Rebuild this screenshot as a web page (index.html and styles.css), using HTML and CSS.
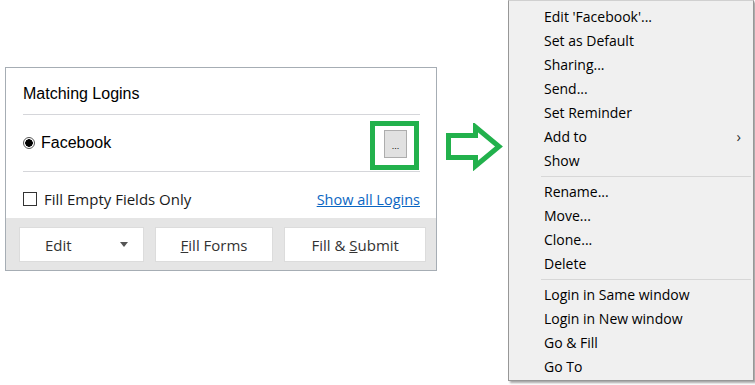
FILE: index.html
```html
<!DOCTYPE html>
<html lang="en">
<head>
  <meta charset="UTF-8">
  <title>Matching Logins</title>
  <link rel="stylesheet" href="styles.css">
</head>
<body>

  <div class="stage">

    <div class="panel">
      <div class="panel-body">
        <div class="panel-title">Matching Logins</div>
        <div class="login-row">
          <span class="radio"></span>
          <span class="login-name">Facebook</span>
          <span class="more-wrap">
            <span class="more-btn">...</span>
            <span class="highlight"></span>
          </span>
        </div>
        <div class="options-row">
          <label class="check-label"><span class="checkbox"></span>Fill Empty Fields Only</label>
          <a class="show-all" href="#">Show all Logins</a>
        </div>
      </div>
      <div class="panel-footer">
        <div class="btn btn-edit"><span>Edit</span><span class="caret"></span></div>
        <div class="btn btn-fill"><span><u>F</u>ill Forms</span></div>
        <div class="btn btn-submit"><span>Fill &amp; <u>S</u>ubmit</span></div>
      </div>
    </div>

    <svg class="arrow" width="58" height="48" viewBox="0 0 58 48">
      <polygon points="2.5,12.5 29.5,12.5 29.5,4 53,23.5 29.5,43 29.5,34.5 2.5,34.5"
               fill="none" stroke="#22b14c" stroke-width="5" stroke-linejoin="miter"/>
    </svg>

    <div class="menu">
      <div class="menu-item">Edit 'Facebook'...</div>
      <div class="menu-item">Set as Default</div>
      <div class="menu-item">Sharing...</div>
      <div class="menu-item">Send...</div>
      <div class="menu-item">Set Reminder</div>
      <div class="menu-item has-sub">Add to <span class="chevron">&#8250;</span></div>
      <div class="menu-item">Show</div>
      <div class="menu-sep"></div>
      <div class="menu-item">Rename...</div>
      <div class="menu-item">Move...</div>
      <div class="menu-item">Clone...</div>
      <div class="menu-item">Delete</div>
      <div class="menu-sep"></div>
      <div class="menu-item">Login in Same window</div>
      <div class="menu-item">Login in New window</div>
      <div class="menu-item">Go &amp; Fill</div>
      <div class="menu-item">Go To</div>
    </div>

  </div>

</body>
</html>
```

FILE: styles.css
```css
body {
  margin: 0;
  background-color: #ffffff;
  font-family: "Open Sans", "Liberation Sans", sans-serif;
  color: #000;
  overflow: hidden;
}
.stage {
  display: flex;
  align-items: flex-start;
  width: 755px;
  height: 385px;
}

/* Matching logins panel */
.panel {
  margin-top: 67px;
  margin-left: 5px;
  width: 430px;
  border: 1px solid #a6adb4;
  background: #fff;
}
.panel-body {
  padding: 0 16px 0 17px;
}
.panel-title {
  font-family: "Liberation Sans", Arial, sans-serif;
  font-size: 16px;
  height: 46px;
  line-height: 52px;
  border-bottom: 1px solid #d5d6da;
}
.login-row {
  display: flex;
  align-items: center;
  height: 56px;
  border-bottom: 1px solid #d5d6da;
}
.radio {
  width: 10px;
  height: 10px;
  border: 1px solid #555;
  border-radius: 50%;
  background: radial-gradient(circle, #000 0, #000 3.5px, #fff 4px);
  margin-right: 6px;
}
.login-name {
  font-family: "Liberation Sans", Arial, sans-serif;
  font-size: 16px;
  flex: 1;
}
.more-wrap {
  position: relative;
  margin-right: 13px;
  margin-top: 2px;
}
.more-btn {
  display: block;
  width: 21px;
  height: 26px;
  background: #e1e1e1;
  border: 1px solid #adadad;
  font-family: "Liberation Sans", Arial, sans-serif;
  font-size: 9px;
  line-height: 30px;
  text-align: center;
}
.highlight {
  position: absolute;
  left: -14px;
  top: -9px;
  width: 39px;
  height: 39px;
  border: 5px solid #22b14c;
}
.options-row {
  display: flex;
  align-items: center;
  justify-content: space-between;
  padding-top: 8px;
  box-sizing: border-box;
  height: 46px;
}
.check-label {
  display: flex;
  align-items: center;
  font-size: 15px;
  color: #1a1a1a;
}
.checkbox {
  width: 12px;
  height: 12px;
  border: 1px solid #333;
  margin-right: 7px;
}
.show-all {
  font-size: 14.5px;
  color: #0b66c3;
  text-decoration: underline;
  margin-right: 0;
}

/* footer buttons */
.panel-footer {
  display: flex;
  background: #e5e5e5;
  padding: 9px 10px 8px 13px;
  gap: 11px;
}
.btn {
  height: 35px;
  box-sizing: border-box;
  background: #fff;
  border: 1px solid #dcdcdc;
  font-size: 15px;
  color: #333;
  display: flex;
  align-items: center;
  justify-content: center;
}
.btn-edit {
  width: 125px;
  justify-content: flex-start;
  padding-left: 25px;
  position: relative;
}
.caret {
  position: absolute;
  right: 15px;
  top: 14px;
  border-left: 4px solid transparent;
  border-right: 4px solid transparent;
  border-top: 5px solid #555;
}
.btn-fill {
  width: 119px;
}
.btn-submit {
  width: 142px;
}

/* arrow */
.arrow {
  margin-top: 123px;
  margin-left: 9px;
  flex: none;
}

/* context menu */
.menu {
  margin-left: 4px;
  width: 240px;
  background: #f0f0f0;
  border: 1px solid #979797;
  border-top-color: #d0d0d0;
  box-shadow: 2px 2px 2px rgba(0, 0, 0, 0.35);
  padding: 4px 2px 1px 2px;
  font-size: 14px;
}
.menu-item {
  height: 24px;
  line-height: 24px;
  padding-left: 33px;
  position: relative;
}
.chevron {
  position: absolute;
  right: 10px;
  top: -1px;
  font-size: 15px;
  color: #333;
}
.menu-sep {
  height: 1px;
  background: #d7d7d7;
  margin: 3px 0 3px 30px;
}
```
